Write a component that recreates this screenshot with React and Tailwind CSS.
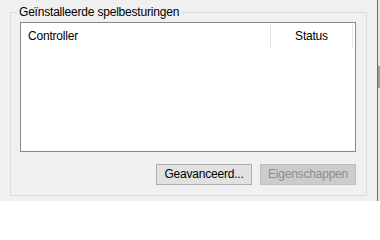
export default function App() {
  return (
    <div
      className="w-[380px] h-[201px] bg-[#f0f0f0] flex overflow-hidden text-[12px] tracking-[-0.2px] text-black"
      style={{ fontFamily: '"Liberation Sans", Arial, sans-serif' }}
    >
      <div className="w-[377px] pl-[10px] pt-[4px]">
        <fieldset className="w-[357px] h-[192px] border border-[#dcdcdc] m-0 p-0">
          <legend className="ml-[6px] px-[2px] leading-[16px] h-[16px]">
            Geïnstalleerde spelbesturingen
          </legend>
          <div className="pl-[9px] pt-[2px]">
            <div className="w-[336px] h-[130px] border border-[#828790] bg-white">
              <div className="flex h-[25px] items-stretch">
                <div className="w-[249px] pl-[7px] pt-[5px] leading-[16px]">Controller</div>
                <div className="w-[1px] bg-[#e5e5e5] mt-[1px]" />
                <div className="w-[81px] text-center pt-[5px] leading-[16px]">Status</div>
                <div className="w-[1px] bg-[#e5e5e5] mt-[1px]" />
              </div>
            </div>
            <div className="flex justify-end gap-[8px] w-[336px] mt-[12px]">
              <button className="w-[96px] h-[21px] border border-[#adadad] bg-[#e1e1e1] leading-[19px] text-center">
                Geavanceerd...
              </button>
              <button
                disabled
                className="w-[96px] h-[21px] border border-[#bfbfbf] bg-[#cccccc] text-[#8d8d8d] leading-[19px] text-center"
              >
                Eigenschappen
              </button>
            </div>
          </div>
        </fieldset>
      </div>
      <div className="w-[1px] h-full bg-[#6e6e6e]" />
      <div className="flex-1 h-full bg-[#e6e6e6] flex flex-col">
        <div className="h-[66px]" />
        <div className="h-[22px] bg-[#a0a0a0]" />
      </div>
    </div>
  )
}
